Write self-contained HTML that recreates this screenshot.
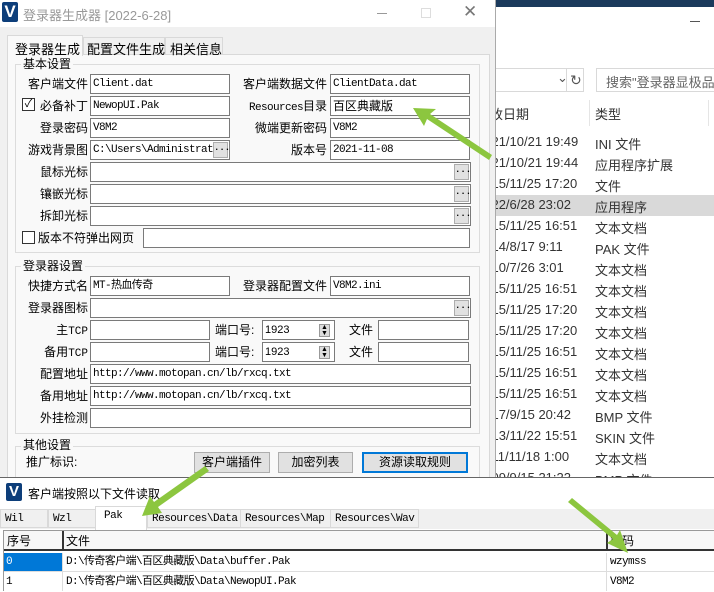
<!DOCTYPE html>
<html><head><meta charset="utf-8"><style>
*{margin:0;padding:0;box-sizing:border-box}
body{width:714px;height:591px;overflow:hidden;position:relative;background:#fff;font-family:"Liberation Sans","Noto Sans CJK SC",sans-serif;font-size:12px;color:#000}
.a{position:absolute;white-space:nowrap}
.in{position:absolute;background:#fff;border:1px solid #7a7a7a;height:20px;font-family:"Liberation Mono","Noto Sans CJK SC",monospace;font-size:11px;line-height:18px;padding-left:2px;white-space:nowrap;overflow:hidden;letter-spacing:-0.6px}
.lb{position:absolute;text-align:right;font-size:12px;line-height:20px;white-space:nowrap}
.dot{position:absolute;right:1px;top:1px;width:15px;height:16px;background:#e1e1e1;border:1px solid #adadad;font-size:9px;line-height:10px;text-align:center;font-weight:bold;letter-spacing:0}
.grp{position:absolute;border:1px solid #dcdcdc}
.gt{position:absolute;background:#f9f9f9;font-size:12px;line-height:14px;padding:0 2px;white-space:nowrap}
.btn{position:absolute;height:21px;background:#e1e1e1;border:1px solid #adadad;font-size:12px;line-height:19px;text-align:center;white-space:nowrap}
.ex{position:absolute;left:477px;font-size:13px;color:#333;white-space:nowrap}
.ty{position:absolute;left:595px;font-size:13px;color:#333;white-space:nowrap}
.tab2{position:absolute;top:509px;height:19px;border:1px solid #d9d9d9;background:#f0f0f0;font-family:"Liberation Mono","Noto Sans CJK SC",monospace;font-size:11px;line-height:18px;padding-left:4px;letter-spacing:-0.5px;white-space:nowrap}
.cell{position:absolute;font-family:"Liberation Mono","Noto Sans CJK SC",monospace;font-size:11px;line-height:20px;white-space:nowrap;letter-spacing:-0.6px}
.tb{position:absolute;font-size:12px;white-space:nowrap;border:1px solid #d9d9d9;border-bottom:none}
</style></head><body>
<!-- explorer bg -->
<div class="a" style="left:0;top:0;width:714px;height:7px;background:#1b3a5c"></div>
<div class="a" style="left:690px;top:21px;width:10px;height:1px;background:#555"></div>
<div class="a" style="left:490px;top:68px;width:94px;height:24px;border:1px solid #d9d9d9;background:#fff"></div>
<div class="a" style="left:557px;top:70px;font-size:13px;color:#555">⌄</div>
<div class="a" style="left:566px;top:69px;width:1px;height:22px;background:#d9d9d9"></div>
<div class="a" style="left:570px;top:72px;font-size:14px;color:#555">↻</div>
<div class="a" style="left:596px;top:68px;width:120px;height:24px;border:1px solid #d9d9d9;background:#fff;font-size:13px;color:#666;padding:3px 0 0 9px;overflow:hidden">搜索"登录器显极品"</div>
<div class="a" style="left:589px;top:100px;width:1px;height:26px;background:#e5e5e5"></div>
<div class="a" style="left:708px;top:100px;width:1px;height:26px;background:#e5e5e5"></div>
<div class="ex" style="top:104px">修改日期</div><div class="ty" style="top:104px">类型</div>
<div class="a" style="left:495px;top:195px;width:219px;height:21px;background:#d9d9d9"></div>
<div class="ex" style="top:134px">2021/10/21 19:49</div><div class="ty" style="top:134px">INI 文件</div>
<div class="ex" style="top:155px">2021/10/21 19:44</div><div class="ty" style="top:155px">应用程序扩展</div>
<div class="ex" style="top:176px">2015/11/25 17:20</div><div class="ty" style="top:176px">文件</div>
<div class="ex" style="top:197px">2022/6/28 23:02</div><div class="ty" style="top:197px">应用程序</div>
<div class="ex" style="top:218px">2015/11/25 16:51</div><div class="ty" style="top:218px">文本文档</div>
<div class="ex" style="top:239px">2014/8/17 9:11</div><div class="ty" style="top:239px">PAK 文件</div>
<div class="ex" style="top:260px">2010/7/26 3:01</div><div class="ty" style="top:260px">文本文档</div>
<div class="ex" style="top:281px">2015/11/25 16:51</div><div class="ty" style="top:281px">文本文档</div>
<div class="ex" style="top:302px">2015/11/25 17:20</div><div class="ty" style="top:302px">文本文档</div>
<div class="ex" style="top:323px">2015/11/25 17:20</div><div class="ty" style="top:323px">文本文档</div>
<div class="ex" style="top:344px">2015/11/25 16:51</div><div class="ty" style="top:344px">文本文档</div>
<div class="ex" style="top:365px">2015/11/25 16:51</div><div class="ty" style="top:365px">文本文档</div>
<div class="ex" style="top:386px">2015/11/25 16:51</div><div class="ty" style="top:386px">文本文档</div>
<div class="ex" style="top:407px">2017/9/15 20:42</div><div class="ty" style="top:407px">BMP 文件</div>
<div class="ex" style="top:428px">2013/11/22 15:51</div><div class="ty" style="top:428px">SKIN 文件</div>
<div class="ex" style="top:449px">2011/11/18 1:00</div><div class="ty" style="top:449px">文本文档</div>
<div class="ex" style="top:470px">2009/9/15 21:22</div><div class="ty" style="top:470px">BMP 文件</div>

<!-- main window -->
<div class="a" style="left:0;top:0;width:496px;height:478px;background:#f0f0f0;border-right:1px solid #aaa"></div>
<div class="a" style="left:0;top:0;width:495px;height:27px;background:#fff"></div>
<div class="a" style="left:2px;top:2px;width:16px;height:20px;background:#0d3e7a;color:#fff;font-weight:bold;font-size:17px;line-height:20px;text-align:center;border-radius:2px">V</div>
<div class="a" style="left:23px;top:5px;font-size:13px;color:#999">登录器生成器 [2022-6-28]</div>
<div class="a" style="left:377px;top:13px;width:10px;height:1px;background:#999"></div>
<div class="a" style="left:421px;top:8px;width:10px;height:10px;border:1px solid #ddd"></div>
<div class="a" style="left:463px;top:2px;font-size:17px;color:#777">✕</div>
<!-- tabs -->
<div class="a" style="left:7px;top:54px;width:483px;height:430px;background:#f9f9f9;border:1px solid #d9d9d9"></div>
<div class="tb" style="left:7px;top:35px;width:76px;height:21px;background:#f9f9f9;padding:3px 0 0 7px;font-size:13px">登录器生成</div>
<div class="tb" style="left:83px;top:37px;width:82px;height:18px;background:#f0f0f0;border-bottom:1px solid #d9d9d9;padding:1px 0 0 3px;font-size:13px">配置文件生成</div>
<div class="tb" style="left:165px;top:37px;width:58px;height:18px;background:#f0f0f0;border-bottom:1px solid #d9d9d9;padding:1px 0 0 4px;font-size:13px">相关信息</div>

<div class="grp" style="left:15px;top:64px;width:465px;height:189px"></div>
<div class="gt" style="left:21px;top:57px">基本设置</div>
<div class="lb" style="left:0;width:88px;top:74px">客户端文件</div><div class="in" style="left:90px;top:74px;width:140px">Client.dat</div>
<div class="lb" style="left:230px;width:97px;top:74px">客户端数据文件</div><div class="in" style="left:330px;top:74px;width:140px">ClientData.dat</div>
<div class="a" style="left:22px;top:98px;width:13px;height:13px;border:1px solid #333;background:#fff;font-size:11px;line-height:11px;text-align:center">✓</div>
<div class="lb" style="left:0;width:88px;top:96px">必备补丁</div><div class="in" style="left:90px;top:96px;width:140px">NewopUI.Pak</div>
<div class="lb" style="left:230px;width:97px;top:96px"><span style="font-family:'Liberation Mono',monospace;font-size:11px;letter-spacing:-0.6px">Resources</span>目录</div><div class="in" style="left:330px;top:96px;width:140px;font-family:'Liberation Sans','Noto Sans CJK SC',sans-serif;font-size:12px;letter-spacing:0">百区典藏版</div>
<div class="lb" style="left:0;width:88px;top:118px">登录密码</div><div class="in" style="left:90px;top:118px;width:140px">V8M2</div>
<div class="lb" style="left:230px;width:97px;top:118px">微端更新密码</div><div class="in" style="left:330px;top:118px;width:140px">V8M2</div>
<div class="lb" style="left:0;width:88px;top:140px">游戏背景图</div><div class="in" style="left:90px;top:140px;width:140px">C:\Users\Administrat<span class="dot">...</span></div>
<div class="lb" style="left:230px;width:97px;top:140px">版本号</div><div class="in" style="left:330px;top:140px;width:140px">2021-11-08</div>
<div class="lb" style="left:0;width:88px;top:162px">鼠标光标</div><div class="in" style="left:90px;top:162px;width:381px"><span class="dot">...</span></div>
<div class="lb" style="left:0;width:88px;top:184px">镶嵌光标</div><div class="in" style="left:90px;top:184px;width:381px"><span class="dot">...</span></div>
<div class="lb" style="left:0;width:88px;top:206px">拆卸光标</div><div class="in" style="left:90px;top:206px;width:381px"><span class="dot">...</span></div>
<div class="a" style="left:22px;top:231px;width:13px;height:13px;border:1px solid #333;background:#fff"></div>
<div class="lb" style="left:38px;top:228px">版本不符弹出网页</div><div class="in" style="left:143px;top:228px;width:327px"></div>

<div class="grp" style="left:15px;top:266px;width:465px;height:168px"></div>
<div class="gt" style="left:21px;top:259px">登录器设置</div>
<div class="lb" style="left:0;width:88px;top:276px">快捷方式名</div><div class="in" style="left:90px;top:276px;width:140px">MT-热血传奇</div>
<div class="lb" style="left:230px;width:97px;top:276px">登录器配置文件</div><div class="in" style="left:330px;top:276px;width:140px">V8M2.ini</div>
<div class="lb" style="left:0;width:88px;top:298px">登录器图标</div><div class="in" style="left:90px;top:298px;width:381px"><span class="dot">...</span></div>
<div class="lb" style="left:0;width:88px;top:320px">主<span style="font-family:'Liberation Mono',monospace;font-size:11px">TCP</span></div><div class="in" style="left:90px;top:320px;width:120px"></div>
<div class="lb" style="left:215px;top:320px">端口号:</div><div class="in" style="left:262px;top:320px;width:73px;font-family:'Liberation Sans',sans-serif;letter-spacing:0">1923<span class="a" style="left:56px;top:3px;width:11px;height:13px;background:#ddd;border:1px solid #999;font-size:7px;line-height:6px;text-align:center">▲<br>▼</span></div>
<div class="lb" style="left:349px;top:320px">文件</div><div class="in" style="left:378px;top:320px;width:91px"></div>
<div class="lb" style="left:0;width:88px;top:342px">备用<span style="font-family:'Liberation Mono',monospace;font-size:11px">TCP</span></div><div class="in" style="left:90px;top:342px;width:120px"></div>
<div class="lb" style="left:215px;top:342px">端口号:</div><div class="in" style="left:262px;top:342px;width:73px;font-family:'Liberation Sans',sans-serif;letter-spacing:0">1923<span class="a" style="left:56px;top:3px;width:11px;height:13px;background:#ddd;border:1px solid #999;font-size:7px;line-height:6px;text-align:center">▲<br>▼</span></div>
<div class="lb" style="left:349px;top:342px">文件</div><div class="in" style="left:378px;top:342px;width:91px"></div>
<div class="lb" style="left:0;width:88px;top:364px">配置地址</div><div class="in" style="left:90px;top:364px;width:381px">http://www.motopan.cn/lb/rxcq.txt</div>
<div class="lb" style="left:0;width:88px;top:386px">备用地址</div><div class="in" style="left:90px;top:386px;width:381px">http://www.motopan.cn/lb/rxcq.txt</div>
<div class="lb" style="left:0;width:88px;top:408px">外挂检测</div><div class="in" style="left:90px;top:408px;width:381px"></div>

<div class="grp" style="left:15px;top:446px;width:465px;height:40px"></div>
<div class="gt" style="left:21px;top:438px">其他设置</div>
<div class="lb" style="left:26px;top:452px">推广标识:</div>
<div class="btn" style="left:194px;top:452px;width:76px">客户端插件</div>
<div class="btn" style="left:278px;top:452px;width:75px">加密列表</div>
<div class="btn" style="left:362px;top:452px;width:106px;border:2px solid #0078d7;line-height:17px">资源读取规则</div>

<!-- second window -->
<div class="a" style="left:0;top:477px;width:714px;height:114px;background:#fff;border-top:1px solid #666"></div>
<div class="a" style="left:6px;top:483px;width:16px;height:18px;background:#0d3e7a;color:#fff;font-weight:bold;font-size:15px;line-height:18px;text-align:center;border-radius:2px">V</div>
<div class="a" style="left:28px;top:485px;font-size:12px">客户端按照以下文件读取</div>
<div class="a" style="left:0;top:509px;width:714px;height:20px;background:#f0f0f0"></div>
<div class="tab2" style="left:0;width:48px">Wil</div>
<div class="tab2" style="left:48px;width:48px">Wzl</div>
<div class="tab2" style="left:95px;top:506px;width:52px;height:24px;background:#fff;border-bottom:none;padding-left:8px">Pak</div>
<div class="tab2" style="left:147px;width:94px">Resources\Data</div>
<div class="tab2" style="left:240px;width:91px">Resources\Map</div>
<div class="tab2" style="left:330px;width:89px">Resources\Wav</div>
<div class="a" style="left:3px;top:530px;width:711px;height:61px;border-left:1px solid #999;border-top:1px solid #999"></div>
<div class="a" style="left:4px;top:531px;width:710px;height:20px;background:#f7f7f7;border-bottom:2px solid #333"></div>
<div class="a" style="left:62px;top:531px;width:2px;height:20px;background:#333"></div>
<div class="a" style="left:606px;top:531px;width:2px;height:20px;background:#333"></div>
<div class="a" style="left:7px;top:531px;font-size:12px;line-height:20px">序号</div>
<div class="a" style="left:66px;top:531px;font-size:12px;line-height:20px">文件</div>
<div class="a" style="left:610px;top:531px;font-size:12px;line-height:20px">密码</div>
<div class="a" style="left:4px;top:553px;width:58px;height:18px;background:#0078d7"></div>
<div class="a" style="left:4px;top:571px;width:710px;height:1px;background:#ddd"></div>
<div class="a" style="left:62px;top:553px;width:1px;height:38px;background:#ddd"></div>
<div class="a" style="left:606px;top:553px;width:1px;height:38px;background:#ddd"></div>
<div class="cell" style="left:6px;top:552px;color:#fff">0</div>
<div class="cell" style="left:66px;top:552px">D:\传奇客户端\百区典藏版\Data\buffer.Pak</div>
<div class="cell" style="left:610px;top:552px">wzymss</div>
<div class="cell" style="left:6px;top:572px">1</div>
<div class="cell" style="left:66px;top:572px">D:\传奇客户端\百区典藏版\Data\NewopUI.Pak</div>
<div class="cell" style="left:610px;top:572px">V8M2</div>

<!-- arrows -->
<svg class="a" style="left:0;top:0" width="714" height="591">
<g fill="#8cc63f">
<polygon points="413,108 436,109 430,114 492,155 489,160 427,119 424,126"/>
<polygon points="142,516 150,496 154,502 205,466 209,471 158,507 162,513"/>
<polygon points="628,553 607,543 613,539 568,502 572,498 617,535 620,530"/>
</g>
</svg>
</body></html>
